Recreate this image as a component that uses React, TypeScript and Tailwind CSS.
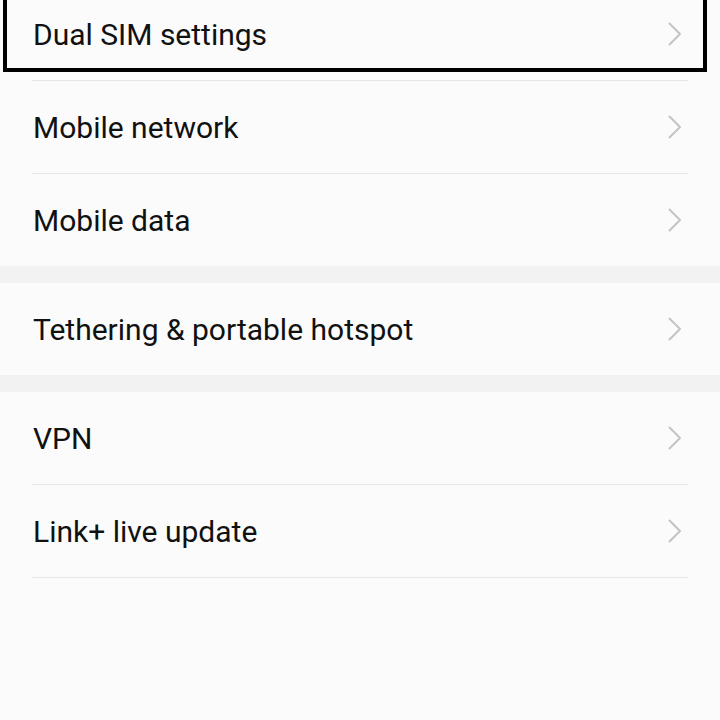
type Row = { label: string; last?: boolean };

const groups: Row[][] = [
  [{ label: "Dual SIM settings" }, { label: "Mobile network" }, { label: "Mobile data", last: true }],
  [{ label: "Tethering & portable hotspot", last: true }],
  [{ label: "VPN" }, { label: "Link+ live update" }],
];

function Chevron() {
  return (
    <svg width="14" height="24" viewBox="0 0 14 24" fill="none" className="shrink-0">
      <path d="M1.5 1.5 L12 12 L1.5 22.5" stroke="#c4c4c4" strokeWidth="2" strokeLinecap="round" strokeLinejoin="round" />
    </svg>
  );
}

function SettingRow({ row }: { row: Row }) {
  return (
    <div className="flex flex-col">
      <div className="h-[92px] flex items-center justify-between pl-[33px] pr-[38px]">
        <span className="text-[30px] text-[#111111] leading-none pt-[2px]">{row.label}</span>
        <Chevron />
      </div>
      {!row.last && <div className="h-px bg-[#e6e6e6] ml-[32px] mr-[32px]" />}
    </div>
  );
}

export default function App() {
  return (
    <div
      className="w-[720px] h-[720px] overflow-hidden bg-[#fbfbfb] relative"
      style={{ fontFamily: "Roboto, 'Noto Sans', sans-serif" }}
    >
      <div className="-mt-[12px] flex flex-col">
        {groups.map((g, gi) => (
          <div key={gi} className="flex flex-col">
            {gi > 0 && <div className="h-[17px] bg-[#f2f2f2]" />}
            {g.map((r) => (
              <SettingRow key={r.label} row={r} />
            ))}
          </div>
        ))}
      </div>
      {/* focus highlight over the first row */}
      <div className="absolute left-[3px] top-[-10px] w-[704px] h-[82px] border-4 border-black pointer-events-none" />
    </div>
  );
}
